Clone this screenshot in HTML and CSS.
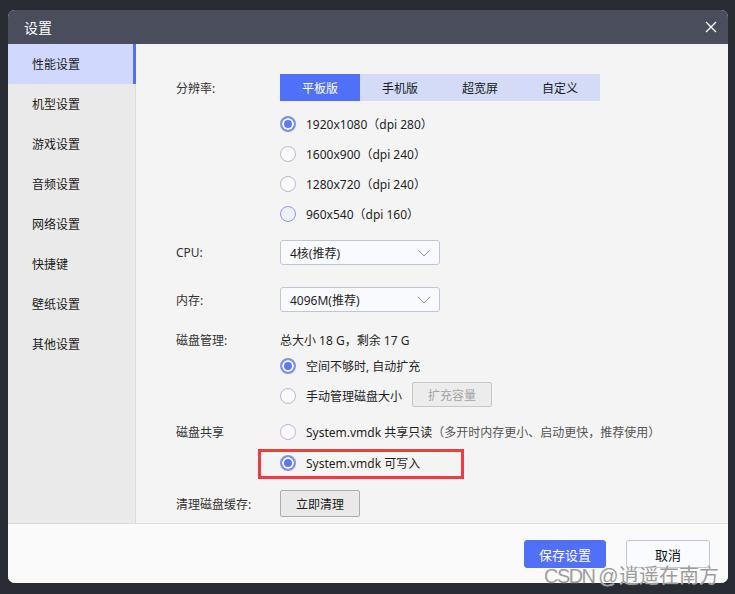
FILE: index.html
```html
<!DOCTYPE html>
<html lang="zh">
<head>
<meta charset="utf-8">
<title>设置</title>
<link rel="stylesheet" href="styles.css">
</head>
<body>
<div class="dialog">
  <div class="titlebar">
    <span class="title">设置</span>
    <svg class="close" width="12" height="12" viewBox="0 0 12 12"><path d="M1 1L11 11M11 1L1 11" stroke="#fff" stroke-width="1.3" fill="none"/></svg>
  </div>
  <div class="main">
    <ul class="sidebar">
      <li class="nav active">性能设置</li>
      <li class="nav">机型设置</li>
      <li class="nav">游戏设置</li>
      <li class="nav">音频设置</li>
      <li class="nav">网络设置</li>
      <li class="nav">快捷键</li>
      <li class="nav">壁纸设置</li>
      <li class="nav">其他设置</li>
    </ul>
    <div class="content">
      <div class="row row-tabs">
        <div class="label">分辨率:</div>
        <div class="tabs">
          <span class="tab active">平板版</span>
          <span class="tab">手机版</span>
          <span class="tab">超宽屏</span>
          <span class="tab">自定义</span>
        </div>
      </div>
      <div class="radios res">
        <div class="radio-row"><span class="radio checked"></span><span>1920x1080（dpi 280）</span></div>
        <div class="radio-row"><span class="radio"></span><span>1600x900（dpi 240）</span></div>
        <div class="radio-row"><span class="radio"></span><span>1280x720（dpi 240）</span></div>
        <div class="radio-row"><span class="radio hover"></span><span>960x540（dpi 160）</span></div>
      </div>
      <div class="row row-cpu">
        <div class="label">CPU:</div>
        <div class="select"><span>4核(推荐)</span><svg width="14" height="8" viewBox="0 0 14 8"><path d="M1 1L7 7L13 1" stroke="#8a8fa0" stroke-width="1" fill="none"/></svg></div>
      </div>
      <div class="row row-mem">
        <div class="label">内存:</div>
        <div class="select"><span>4096M(推荐)</span><svg width="14" height="8" viewBox="0 0 14 8"><path d="M1 1L7 7L13 1" stroke="#8a8fa0" stroke-width="1" fill="none"/></svg></div>
      </div>
      <div class="row row-disk">
        <div class="label">磁盘管理:</div>
        <div class="text">总大小 18 G，剩余 17 G</div>
      </div>
      <div class="radios disk">
        <div class="radio-row"><span class="radio checked"></span><span>空间不够时, 自动扩充</span></div>
        <div class="radio-row"><span class="radio"></span><span>手动管理磁盘大小</span><span class="btn disabled">扩充容量</span></div>
      </div>
      <div class="row row-share">
        <div class="label">磁盘共享</div>
        <div class="radio-row"><span class="radio"></span><span>System.vmdk 共享只读</span><span class="note">（多开时内存更小、启动更快，推荐使用）</span></div>
      </div>
      <div class="row row-write">
        <div class="label"></div>
        <div class="radio-row highlight"><span class="radio checked"></span><span>System.vmdk 可写入</span><span class="redbox"></span></div>
      </div>
      <div class="row row-clean">
        <div class="label">清理磁盘缓存:</div>
        <span class="btn clean">立即清理</span>
      </div>
    </div>
  </div>
  <div class="footer">
    <span class="fbtn primary">保存设置</span>
    <span class="fbtn">取消</span>
  </div>
</div>
<div class="watermark"><span class="wm-latin">CSDN @</span>逍遥在南方</div>
</body>
</html>
```

FILE: styles.css
```css
* { box-sizing: border-box; }
html, body { margin: 0; padding: 0; }
body {
  width: 735px;
  height: 594px;
  background: #2a2c33;
  font-family: "Noto Sans", "Noto Sans CJK SC", sans-serif;
  font-size: 12px;
  color: #1f1f1f;
  padding: 10px 0 0 8px;
  position: relative;
  overflow: hidden;
}
.dialog {
  width: 720px;
  height: 573px;
  border-radius: 7px;
  overflow: hidden;
  display: flex;
  flex-direction: column;
  background: #f4f4f4;
}
.titlebar {
  height: 34px;
  flex: none;
  background: #4a4d5c;
  display: flex;
  align-items: center;
  justify-content: space-between;
  padding: 0 11px 0 16px;
}
.title { color: #fff; font-size: 14px; }
.close { display: block; }
.main {
  flex: none;
  height: 479px;
  display: flex;
}
.sidebar {
  list-style: none;
  margin: 0;
  padding: 0;
  width: 128px;
  flex: none;
  background: #eaeaea;
  border-right: 1px solid #dadada;
}
.nav {
  height: 40px;
  display: flex;
  align-items: center;
  padding-left: 24px;
  color: #1a1a1a;
}
.nav.active {
  background: #d0d9fd;
  box-shadow: inset -3px 0 0 #5070f8;
  margin-right: -1px;
}
.content {
  flex: 1;
  padding: 30px 0 0 40px;
}
.row {
  display: flex;
  align-items: center;
}
.label {
  width: 104px;
  flex: none;
  color: #333;
}
.tabs { display: flex; }
.tab {
  width: 80px;
  height: 27px;
  display: flex;
  align-items: center;
  justify-content: center;
  background: #d3dbf7;
  color: #1a1a1a;
}
.tab.active { background: #5070fa; color: #fff; }
.radios { padding-left: 104px; }
.radios.res { margin-top: 8px; }
.radio-row {
  height: 30px;
  display: flex;
  align-items: center;
}
.radio {
  width: 16px;
  height: 16px;
  border-radius: 50%;
  border: 1px solid #b9bccb;
  background: #f9f9fe;
  margin-right: 10px;
  flex: none;
}
.radio.hover { border-color: #8597f2; background: #eef1fd; }
.radio.checked {
  border: 2px solid #7b91fa;
  background: #5a78f9;
  box-shadow: inset 0 0 0 2px #fff;
}
.row-cpu { margin-top: 11px; }
.row-mem { margin-top: 22px; }
.select {
  width: 160px;
  height: 25px;
  border: 1px solid #c2c5d2;
  border-radius: 3px;
  background: #f9fafe;
  display: flex;
  align-items: center;
  justify-content: space-between;
  padding: 0 8px 0 9px;
}
.row-disk { margin-top: 18px; height: 20px; }
.radios.disk { margin-top: 1px; }
.btn {
  width: 80px;
  height: 25px;
  display: inline-flex;
  align-items: center;
  justify-content: center;
  border: 1px solid #c8c8c8;
  border-radius: 2px;
  background: #ececec;
  margin-left: 10px;
}
.btn.disabled { color: #a5a5a5; margin-top: -3px; }
.btn.clean {
  margin-left: 0;
  height: 27px;
  border-color: #adadad;
  background: #e9e9e9;
  color: #1a1a1a;
}
.row-share { margin-top: 6px; }
.note { color: #555; }
.row-write { margin-top: 1px; }
.highlight { position: relative; }
.redbox {
  position: absolute;
  left: -22px;
  top: 1px;
  width: 206px;
  height: 30px;
  border: 3px solid #f23c3c;
}
.row-clean { margin-top: 12px; }
.footer {
  flex: 1;
  background: #fafafa;
  border-top: 1px solid #dcdcdc;
  display: flex;
  justify-content: flex-end;
  align-items: flex-start;
  gap: 20px;
  padding: 16px 18px 0 0;
}
.fbtn {
  width: 84px;
  height: 28px;
  display: flex;
  align-items: center;
  justify-content: center;
  font-size: 13px;
  border: 1px solid #c3c6d2;
  border-radius: 3px;
  background: #fafbff;
  color: #111;
}
.fbtn.primary {
  width: 82px;
  background: #5070fa;
  border-color: #5070fa;
  color: #fff;
}
.watermark {
  position: absolute;
  right: 16px;
  top: 560px;
  font-size: 20px;
  color: #9c9c9c;
  text-shadow: 0 0 1px #fff;
  font-family: "Liberation Sans", "Noto Sans CJK SC", sans-serif;
}
.wm-latin { letter-spacing: -1.6px; margin-right: 2px; }
```
